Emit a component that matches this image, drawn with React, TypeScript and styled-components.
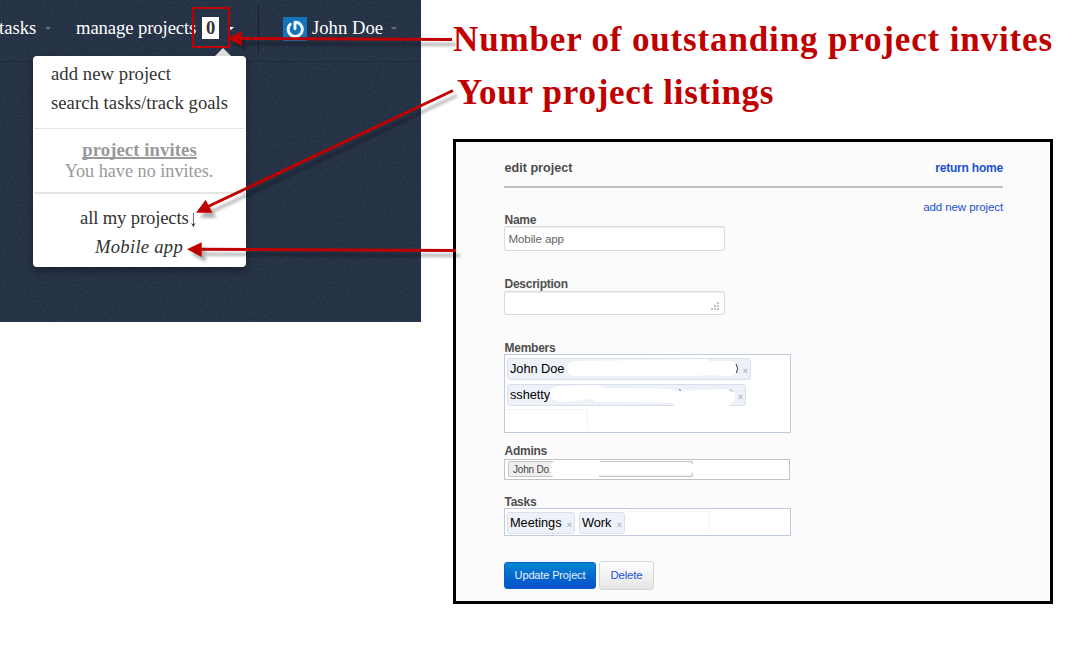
import React from "react";
import styled, { createGlobalStyle } from "styled-components";

const Global = createGlobalStyle`
  * { box-sizing: border-box; }
  body { margin: 0; background: #fff; }
`;

const serif = `"Liberation Serif", "Times New Roman", serif`;
const sans = `"Liberation Sans", Arial, sans-serif`;

const Page = styled.main`
  position: relative;
  display: flex;
  align-items: flex-start;
  gap: 32px;
  width: 1088px;
  height: 665px;
  overflow: hidden;
`;

/* ---------- dark site header ---------- */
const SitePreview = styled.section`
  position: relative;
  flex: none;
  width: 421px;
  height: 322px;
  background: #253145;
  overflow: hidden;
  font: 18.67px ${serif};
`;

const Texture = styled.svg`
  position: absolute;
  inset: 0;
  width: 100%;
  height: 100%;
`;

const NavBar = styled.nav`
  position: relative;
  display: flex;
  align-items: center;
  height: 62px;
  padding-bottom: 5px;
  border-bottom: 1px solid #1f2a3b;
  color: #fff;
  white-space: nowrap;
`;

const NavItem = styled.div<{ $width: number; $tracking?: number }>`
  display: flex;
  align-items: center;
  flex: none;
  width: ${(p) => p.$width}px;
  letter-spacing: ${(p) => p.$tracking ?? 0}px;
`;

const ClippedLabel = styled.span`
  margin-left: -1px;
`;

const Caret = styled.i<{ $bright?: boolean; $gap: number }>`
  margin: 1px 0 0 ${(p) => p.$gap}px;
  border: 3.5px solid transparent;
  border-top-color: ${(p) => (p.$bright ? "#fff" : "#68707d")};
  border-bottom: 0;
`;

const Count = styled.b`
  width: 17px;
  height: 22px;
  margin: -1px 0 0 6px;
  line-height: 22px;
  text-align: center;
  color: #333;
  background: #fff;
`;

const NavDivider = styled.span`
  flex: none;
  width: 1px;
  height: 48px;
  margin: 1px 24px 0 0;
  background: #1a1f28;
`;

const Avatar = styled.svg`
  flex: none;
  width: 24px;
  height: 24px;
  margin: 1px 5px 0 0;
`;

const Menu = styled.div`
  position: absolute;
  left: 33px;
  top: 56px;
  width: 213px;
  height: 211px;
  padding-top: 3px;
  border-radius: 4px;
  background: #fff;
  box-shadow: 0 4px 9px rgba(0, 0, 0, 0.35);
  color: #333;
  white-space: nowrap;
`;

const MenuNotch = styled.span`
  position: absolute;
  left: 182px;
  top: -8px;
  border: 8px solid transparent;
  border-top: 0;
  border-bottom-color: #dcdcdc;
`;

const MenuLink = styled.div<{ $indent: number; $tracking?: number; $italic?: boolean }>`
  height: 29px;
  line-height: 29px;
  padding-left: ${(p) => p.$indent}px;
  letter-spacing: ${(p) => p.$tracking ?? 0}px;
  font-style: ${(p) => (p.$italic ? "italic" : "normal")};
`;

const Invites = styled.div`
  height: 66px;
  margin: 11px 1px 9px;
  padding-top: 10px;
  border-top: 1px solid #e3e3e3;
  border-bottom: 2px solid #e5e5e5;
  text-align: center;
  line-height: 21px;
  color: #999;
`;

const InvitesTitle = styled.b`
  display: block;
  letter-spacing: 0.1px;
  text-decoration: underline;
  text-decoration-thickness: 2px;
  text-underline-offset: 1px;
  text-decoration-skip-ink: none;
`;

const InvitesNote = styled.div`
  padding-right: 1px;
  font-size: 18.2px;
  line-height: 23px;
`;

const DownGlyph = styled.span`
  display: inline-block;
  width: 9px;
  font-size: 17px;
  line-height: 20px;
  text-indent: 0.5px;
  transform: scaleY(1.4);
`;

/* ---------- callouts and form ---------- */
const Side = styled.section`
  width: 600px;
`;

const Callouts = styled.header`
  height: 139px;
  padding-top: 13px;
`;

const Callout = styled.h2<{ $indent?: number; $tracking: number }>`
  height: 53px;
  margin: 0;
  padding-left: ${(p) => p.$indent ?? 0}px;
  font: bold 35px/53px ${serif};
  letter-spacing: ${(p) => p.$tracking}px;
  color: #c00000;
  white-space: nowrap;
`;

const Panel = styled.div`
  width: 600px;
  height: 465px;
  padding: 0 47px 0 48px;
  border: 3px solid #000;
  background: #fbfbfb;
  font-family: ${sans};
`;

const PanelHead = styled.div`
  display: flex;
  justify-content: space-between;
  height: 46px;
  padding-top: 1px;
  border-bottom: 2px solid #c0c0c0;
  font-size: 12.6px;
  font-weight: bold;
  line-height: 50px;
  color: #4b4b4b;
`;

const PanelTitle = styled.span`
  padding-left: 0.5px;
`;

const Link = styled.a<{ $bold?: boolean }>`
  font-size: ${(p) => (p.$bold ? 12 : 11.6)}px;
  font-weight: ${(p) => (p.$bold ? "bold" : "normal")};
  letter-spacing: ${(p) => (p.$bold ? -0.2 : -0.14)}px;
  color: #1c51d0;
`;

const PanelBody = styled.div`
  display: flex;
  justify-content: space-between;
  padding-top: 12px;
`;

const Form = styled.form`
  width: 290px;
  padding-top: 13px;
`;

const Field = styled.div<{ $after: number }>`
  margin-bottom: ${(p) => p.$after}px;
`;

const Label = styled.label<{ $h?: number; $drop?: number }>`
  display: block;
  height: ${(p) => p.$h ?? 13}px;
  padding-left: 0.5px;
  font-size: 12px;
  font-weight: bold;
  letter-spacing: -0.25px;
  line-height: ${(p) => (p.$h ?? 13) + (p.$drop ?? 2)}px;
  color: #4f4f4f;
`;

const TextBox = styled.div<{ $h: number }>`
  display: flex;
  align-items: center;
  justify-content: space-between;
  width: 221px;
  height: ${(p) => p.$h}px;
  padding: 0 5px 0 3.5px;
  border: 1px solid #dadada;
  border-radius: 2px;
  background: #fff;
  box-shadow: inset 0 1px 1px #eee;
  font-size: 11.6px;
  letter-spacing: -0.14px;
  color: #666;
`;

const Grip = styled.svg`
  width: 8px;
  height: 8px;
  margin: 6px 0 0 auto;
`;

const TokenBox = styled.div<{ $h: number; $w?: number; $grey?: boolean }>`
  position: relative;
  display: flex;
  flex-wrap: wrap;
  align-content: flex-start;
  column-gap: 4px;
  row-gap: 4px;
  width: ${(p) => p.$w ?? 287}px;
  height: ${(p) => p.$h}px;
  padding: ${(p) => (p.$grey ? "1px 3px" : "3px 2px")};
  border: 1px solid ${(p) => (p.$grey ? "#c3c3c3" : "#c0cbe0")};
  background: #fff;
`;

const Token = styled.span<{ $w: number }>`
  display: flex;
  align-items: center;
  justify-content: space-between;
  width: ${(p) => p.$w}px;
  height: 22px;
  padding: 0 2px 1px;
  border: 1px solid #d9e0ec;
  border-radius: 3px;
  background: #eef2f8;
  font-size: 12.8px;
  letter-spacing: -0.05px;
  line-height: 14px;
  color: #000;
  white-space: nowrap;
`;

const TokenClose = styled.i`
  margin-top: 4px;
  font: bold 9px ${sans};
  color: #adb9d0;
`;

const AdminToken = styled.span`
  width: 185px;
  height: 16px;
  padding-left: 4px;
  border: 1px solid #c4c4c4;
  border-radius: 2px;
  background: #eee;
  font-size: 10px;
  letter-spacing: -0.2px;
  line-height: 15px;
  color: #444;
`;

const GhostInput = styled.span<{ $w: number; $h: number; $shift?: number }>`
  width: ${(p) => p.$w}px;
  height: ${(p) => p.$h}px;
  margin-left: ${(p) => p.$shift ?? 0}px;
  margin-top: -1px;
  border: 1px solid #f3f3f3;
  border-bottom: 0;
  border-left: 0;
`;

const Redaction = styled.svg`
  position: absolute;
  left: 0;
  top: 0;
  fill: #fff;
`;

const Actions = styled.div`
  display: flex;
  align-items: center;
  gap: 3px;
`;

const Button = styled.button<{ $primary?: boolean }>`
  width: ${(p) => (p.$primary ? 92 : 55)}px;
  height: ${(p) => (p.$primary ? 27 : 29)}px;
  padding: 0 0 1px;
  border: 1px solid ${(p) => (p.$primary ? "#0a5fc4" : "#d6d6d6")};
  border-radius: 3px;
  background: ${(p) => (p.$primary ? "linear-gradient(#0785cf, #0350cd)" : "linear-gradient(#fff, #e5e5e5)")};
  font: ${(p) => (p.$primary ? 11 : 11.4)}px ${sans};
  letter-spacing: -0.14px;
  color: ${(p) => (p.$primary ? "#e8f1fc" : "#1c51d0")};
  white-space: nowrap;
`;

const Arrows = styled.svg`
  position: absolute;
  left: 0;
  top: 0;
  pointer-events: none;
`;

function GravatarLogo() {
  return (
    <Avatar viewBox="0 0 24 24">
      <rect width="24" height="24" fill="#1275b9" />
      <path d="M7.3 7.2A7.1 7.1 0 1 0 12 5.2V11.8" fill="none" stroke="#f2f8fc" strokeWidth="2.9" strokeLinecap="round" strokeLinejoin="round" />
    </Avatar>
  );
}

export default function App() {
  return (
    <Page>
      <Global />
      <SitePreview>
        <Texture>
          <filter id="grain">
            <feTurbulence type="fractalNoise" baseFrequency="0.45" numOctaves="2" />
            <feColorMatrix values="0 0 0 0 .3  0 0 0 0 .42  0 0 0 0 .42  .7 0 0 0 -.3" />
          </filter>
          <rect width="100%" height="100%" filter="url(#grain)" opacity=".28" />
        </Texture>
        <NavBar>
          <NavItem $width={76}>
            <ClippedLabel>tasks</ClippedLabel>
            <Caret $gap={9} />
          </NavItem>
          <NavItem $width={182} $tracking={-0.1}>
            manage projects
            <Count>0</Count>
            <Caret $bright $gap={9} />
          </NavItem>
          <NavDivider />
          <NavItem $width={137}>
            <GravatarLogo />
            John Doe
            <Caret $gap={8} />
          </NavItem>
        </NavBar>
        <Menu>
          <MenuNotch />
          <MenuLink $indent={18} $tracking={0.06}>add new project</MenuLink>
          <MenuLink $indent={18} $tracking={0.04}>search tasks/track goals</MenuLink>
          <Invites>
            <InvitesTitle>project invites</InvitesTitle>
            <InvitesNote>You have no invites.</InvitesNote>
          </Invites>
          <MenuLink $indent={47} $tracking={-0.15}>
            all my projects<DownGlyph>↓</DownGlyph>
          </MenuLink>
          <MenuLink $indent={62} $tracking={0.25} $italic>Mobile app</MenuLink>
        </Menu>
      </SitePreview>

      <Side>
        <Callouts>
          <Callout $tracking={0.85}>Number of outstanding project invites</Callout>
          <Callout $indent={4} $tracking={0.72}>Your project listings</Callout>
        </Callouts>
        <Panel>
          <PanelHead>
            <PanelTitle>edit project</PanelTitle>
            <Link $bold>return home</Link>
          </PanelHead>
          <PanelBody>
            <Form>
              <Field $after={27}>
                <Label>Name</Label>
                <TextBox $h={25}>Mobile app</TextBox>
              </Field>
              <Field $after={26}>
                <Label $drop={0}>Description</Label>
                <TextBox $h={24}>
                  <Grip fill="#c4c4c4">
                    <path d="M6 0h2v2H6zM3 3h2v2H3zM6 3h2v2H6zM0 6h2v2H0zM3 6h2v2H3zM6 6h2v2H6z" />
                  </Grip>
                </TextBox>
              </Field>
              <Field $after={11}>
                <Label>Members</Label>
                <TokenBox $h={79}>
                  <Token $w={244}>John Doe<TokenClose>×</TokenClose></Token>
                  <Token $w={239}>sshetty<TokenClose>×</TokenClose></Token>
                  <GhostInput $w={83} $h={22} $shift={-2} />
                  <Redaction width="285" height="77">
                    <path d="M62 13C63 6 68 6 75 6L140 5L201 4L205 6L225 6Q233 7 232 15Q231 20 226 21L204 20L188 21L70 21Q62 20 62 13Z" />
                    <path d="M45 38Q46 31 55 31L93 30L98 33L164 34L173 36L221 34Q232 36 230 43Q228 50 222 51L169 51L168 48L90 47L88 44L56 47Q45 46 45 38Z" />
                    <path d="M231 9Q234 13 231.500 18" fill="none" stroke="#23415d" />
                    <path d="M174 34.500l2 1M225 34.500l2 2" stroke="#4b7390" />
                  </Redaction>
                </TokenBox>
              </Field>
              <Field $after={15}>
                <Label $h={15} $drop={0}>Admins</Label>
                <TokenBox $h={21} $w={286} $grey>
                  <AdminToken>John Do.</AdminToken>
                  <Redaction width="284" height="19">
                    <path d="M45 9Q45 1 52 0H95V2H183L189 5V12L184 15H94V18H51Q45 17 45 9Z" />
                  </Redaction>
                </TokenBox>
              </Field>
              <Field $after={25}>
                <Label>Tasks</Label>
                <TokenBox $h={28}>
                  <Token $w={68}>Meetings<TokenClose>×</TokenClose></Token>
                  <Token $w={46}>Work<TokenClose>×</TokenClose></Token>
                  <GhostInput $w={81} $h={20} />
                </TokenBox>
              </Field>
              <Actions>
                <Button type="button" $primary>Update Project</Button>
                <Button type="button">Delete</Button>
              </Actions>
            </Form>
            <Link>add new project</Link>
          </PanelBody>
        </Panel>
      </Side>

      <Arrows width="1088" height="665">
        <defs>
          <filter id="soft" filterUnits="userSpaceOnUse" x="0" y="0" width="1088" height="665">
            <feGaussianBlur stdDeviation="1.5" />
          </filter>
          <g id="pointers">
            <path d="M240 38.5L452 39.5M207 207L453 90.5M200 249.3L456 250.5" fill="none" strokeWidth="3" />
            <path d="M227.500 38.500L241.700 31V46ZM196 212.700L205.700 199.700L212.300 212.700ZM187 249.300L201.700 242.300V257Z" stroke="none" />
          </g>
        </defs>
        <use href="#pointers" x="4" y="5" fill="#000" stroke="#000" opacity=".3" filter="url(#soft)" />
        <rect x="193" y="8" width="36" height="39" fill="none" stroke="#c00000" strokeWidth="2" />
        <use href="#pointers" fill="#c00000" stroke="#c00000" />
      </Arrows>
    </Page>
  );
}
